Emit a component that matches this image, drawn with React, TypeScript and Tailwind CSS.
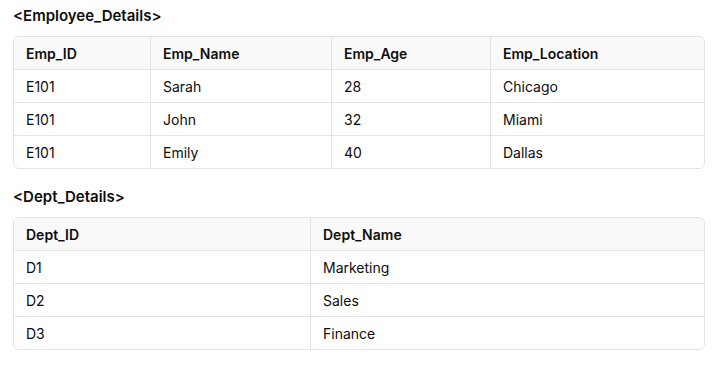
import React from "react";

type TableProps = {
  cols: string;
  headers: string[];
  rows: string[][];
};

const DataTable = ({ cols, headers, rows }: TableProps) => {
  return (
    <div className="w-[692px] overflow-hidden rounded-[6px] border border-[#e3e3e3] text-[14px] text-[#0d0d0d]">
      <div className={"grid h-[32px] bg-[#f9f9f9] " + cols}>
        {headers.map((h, i) => (
          <div
            key={h}
            className={
              "flex items-center px-[12px] font-semibold " +
              (i > 0 ? "border-l border-[#e3e3e3]" : "")
            }
          >
            {h}
          </div>
        ))}
      </div>
      {rows.map((r, ri) => (
        <div key={ri} className={"grid h-[33px] border-t border-[#e3e3e3] " + cols}>
          {r.map((cell, i) => (
            <div
              key={i}
              className={
                "flex items-center px-[12px] " +
                (i > 0 ? "border-l border-[#e3e3e3]" : "")
              }
            >
              {cell}
            </div>
          ))}
        </div>
      ))}
    </div>
  );
};

export default function App() {
  return (
    <div
      className="min-h-screen w-[727px] bg-white px-[13px] pt-[5px] text-[#0d0d0d]"
      style={{ fontFamily: "Inter, 'Noto Sans', sans-serif" }}
    >
      <h2 className="mb-[9px] text-[15px] font-semibold leading-[22px]">&lt;Employee_Details&gt;</h2>
      <DataTable
        cols="grid-cols-[136px_181px_159px_1fr]"
        headers={["Emp_ID", "Emp_Name", "Emp_Age", "Emp_Location"]}
        rows={[
          ["E101", "Sarah", "28", "Chicago"],
          ["E101", "John", "32", "Miami"],
          ["E101", "Emily", "40", "Dallas"],
        ]}
      />
      <h2 className="mb-[9px] mt-[17px] text-[15px] font-semibold leading-[22px]">&lt;Dept_Details&gt;</h2>
      <DataTable
        cols="grid-cols-[296px_1fr]"
        headers={["Dept_ID", "Dept_Name"]}
        rows={[
          ["D1", "Marketing"],
          ["D2", "Sales"],
          ["D3", "Finance"],
        ]}
      />
    </div>
  );
}
